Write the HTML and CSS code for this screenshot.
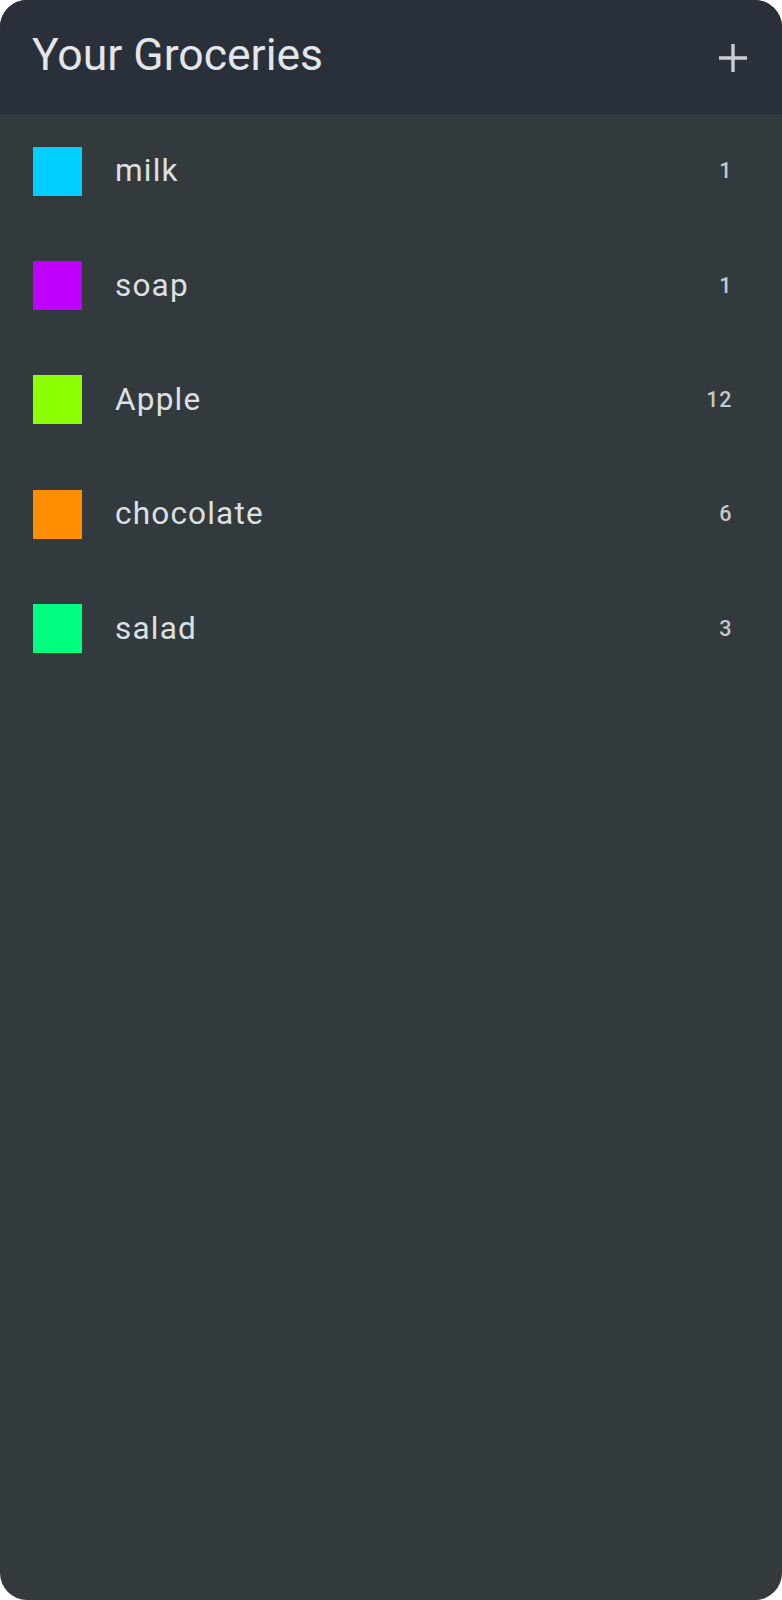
FILE: index.html
```html
<!DOCTYPE html>
<html lang="en">
<head>
<meta charset="utf-8">
<title>Your Groceries</title>
<link rel="stylesheet" href="styles.css">
</head>
<body>
<div class="app">
  <header class="topbar">
    <h1 class="title">Your Groceries</h1>
    <button class="add" aria-label="Add item">
      <svg viewBox="0 0 30 30" width="30" height="30"><path d="M15 1v28M1 15h28" stroke="currentColor" stroke-width="3.4" fill="none"/></svg>
    </button>
  </header>
  <ul class="list">
    <li class="item"><span class="swatch" style="background:#00cfff"></span><span class="name">milk</span><span class="qty">1</span></li>
    <li class="item"><span class="swatch" style="background:#bf00ff"></span><span class="name">soap</span><span class="qty">1</span></li>
    <li class="item"><span class="swatch" style="background:#8cff00"></span><span class="name">Apple</span><span class="qty">12</span></li>
    <li class="item"><span class="swatch" style="background:#ff8f00"></span><span class="name">chocolate</span><span class="qty">6</span></li>
    <li class="item"><span class="swatch" style="background:#00ff80"></span><span class="name">salad</span><span class="qty">3</span></li>
  </ul>
</div>
</body>
</html>
```
FILE: styles.css
```css
html, body {
  margin: 0;
  padding: 0;
  background: #ffffff;
}
body {
  font-family: Roboto, "Noto Sans", sans-serif;
}
.app {
  width: 782px;
  height: 1600px;
  border-radius: 27px;
  overflow: hidden;
  background: #323a3d;
  display: flex;
  flex-direction: column;
}
.topbar {
  height: 114px;
  flex: none;
  background: #29303a;
  display: flex;
  align-items: center;
  justify-content: space-between;
  padding: 0 34px 0 32px;
}
.title {
  margin: 0;
  font-size: 44.5px;
  font-weight: 400;
  color: #e3e6e9;
  letter-spacing: 0;
  line-height: 1;
  padding-bottom: 4px;
}
.add {
  background: none;
  border: 0;
  padding: 0;
  width: 30px;
  height: 30px;
  color: #c9ced4;
  display: flex;
  margin-top: 2px;
}
.list {
  list-style: none;
  margin: 0;
  padding: 0;
}
.item {
  height: 114.3px;
  display: flex;
  align-items: center;
  padding: 0 50px 0 33px;
}
.swatch {
  width: 49px;
  height: 49px;
  flex: none;
}
.name {
  margin-left: 33px;
  flex: 1;
  font-size: 31.5px;
  letter-spacing: 1.2px;
  color: #dde0e3;
  line-height: 1;
}
.qty {
  font-size: 21.5px;
  font-weight: 500;
  letter-spacing: 0.6px;
  color: #c4c9cc;
  line-height: 1;
}
```
